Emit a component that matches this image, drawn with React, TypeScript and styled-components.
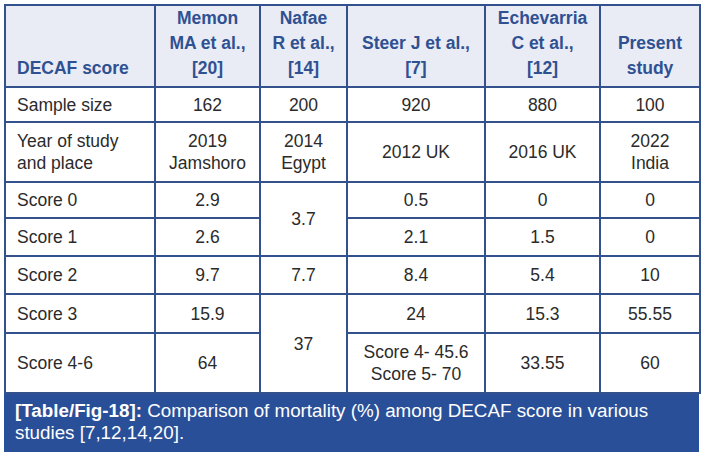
import React from 'react';
import styled, { createGlobalStyle } from 'styled-components';

const GlobalStyle = createGlobalStyle`
  html, body {
    margin: 0;
    padding: 0;
    background: #ffffff;
  }
  body {
    font-family: "Liberation Sans", Arial, sans-serif;
  }
`;

const Figure = styled.div`
  width: 695px;
  padding: 4px 0 0 4px;
`;

const Table = styled.table`
  width: 695px;
  border-collapse: collapse;
  table-layout: fixed;
  font-size: 17.5px;
  color: #2b2b2b;
`;

const HeadRow = styled.tr`
  height: 82px;
  background: #e9ebf5;
`;

const HeadCell = styled.th<{ $left?: boolean }>`
  border: 2px solid #33518c;
  color: #2f5192;
  font-weight: bold;
  line-height: 25px;
  vertical-align: bottom;
  text-align: ${(p) => (p.$left ? 'left' : 'center')};
  padding: 0 4px 5px ${(p) => (p.$left ? '11px' : '4px')};
`;

const Row = styled.tr<{ $h: number }>`
  height: ${(p) => p.$h}px;
`;

const Cell = styled.td<{ $left?: boolean }>`
  border: 2px solid #33518c;
  line-height: 22px;
  vertical-align: middle;
  text-align: ${(p) => (p.$left ? 'left' : 'center')};
  padding: 0 4px 0 ${(p) => (p.$left ? '11px' : '4px')};
`;

const Caption = styled.div`
  background: #2a4f99;
  color: #ffffff;
  font-size: 18.8px;
  line-height: 22px;
  padding: 6px 10px 12px 11px;
  width: 695px;
  box-sizing: border-box;

  b {
    font-weight: bold;
  }
`;

const widths = [150, 105, 87, 138, 115, 100];

export default function App() {
  return (
    <>
      <GlobalStyle />
      <Figure>
        <Table>
          <colgroup>
            {widths.map((w, i) => (
              <col key={i} style={{ width: w }} />
            ))}
          </colgroup>
          <thead>
            <HeadRow>
              <HeadCell $left>DECAF score</HeadCell>
              <HeadCell>
                Memon
                <br />
                MA et al.,
                <br />
                [20]
              </HeadCell>
              <HeadCell>
                Nafae
                <br />
                R et al.,
                <br />
                [14]
              </HeadCell>
              <HeadCell>
                Steer J et al.,
                <br />
                [7]
              </HeadCell>
              <HeadCell>
                Echevarria
                <br />
                C et al.,
                <br />
                [12]
              </HeadCell>
              <HeadCell>
                Present
                <br />
                study
              </HeadCell>
            </HeadRow>
          </thead>
          <tbody>
            <Row $h={35}>
              <Cell $left>Sample size</Cell>
              <Cell>162</Cell>
              <Cell>200</Cell>
              <Cell>920</Cell>
              <Cell>880</Cell>
              <Cell>100</Cell>
            </Row>
            <Row $h={60}>
              <Cell $left>
                Year of study
                <br />
                and place
              </Cell>
              <Cell>
                2019
                <br />
                Jamshoro
              </Cell>
              <Cell>
                2014
                <br />
                Egypt
              </Cell>
              <Cell>2012 UK</Cell>
              <Cell>2016 UK</Cell>
              <Cell>
                2022
                <br />
                India
              </Cell>
            </Row>
            <Row $h={36}>
              <Cell $left>Score 0</Cell>
              <Cell>2.9</Cell>
              <Cell rowSpan={2}>3.7</Cell>
              <Cell>0.5</Cell>
              <Cell>0</Cell>
              <Cell>0</Cell>
            </Row>
            <Row $h={38}>
              <Cell $left>Score 1</Cell>
              <Cell>2.6</Cell>
              <Cell>2.1</Cell>
              <Cell>1.5</Cell>
              <Cell>0</Cell>
            </Row>
            <Row $h={38}>
              <Cell $left>Score 2</Cell>
              <Cell>9.7</Cell>
              <Cell>7.7</Cell>
              <Cell>8.4</Cell>
              <Cell>5.4</Cell>
              <Cell>10</Cell>
            </Row>
            <Row $h={39}>
              <Cell $left>Score 3</Cell>
              <Cell>15.9</Cell>
              <Cell rowSpan={2}>37</Cell>
              <Cell>24</Cell>
              <Cell>15.3</Cell>
              <Cell>55.55</Cell>
            </Row>
            <Row $h={60}>
              <Cell $left>Score 4-6</Cell>
              <Cell>64</Cell>
              <Cell>
                Score 4- 45.6
                <br />
                Score 5- 70
              </Cell>
              <Cell>33.55</Cell>
              <Cell>60</Cell>
            </Row>
          </tbody>
        </Table>
        <Caption>
          <b>[Table/Fig-18]:</b> Comparison of mortality (%) among DECAF score in various
          studies [7,12,14,20].
        </Caption>
      </Figure>
    </>
  );
}
